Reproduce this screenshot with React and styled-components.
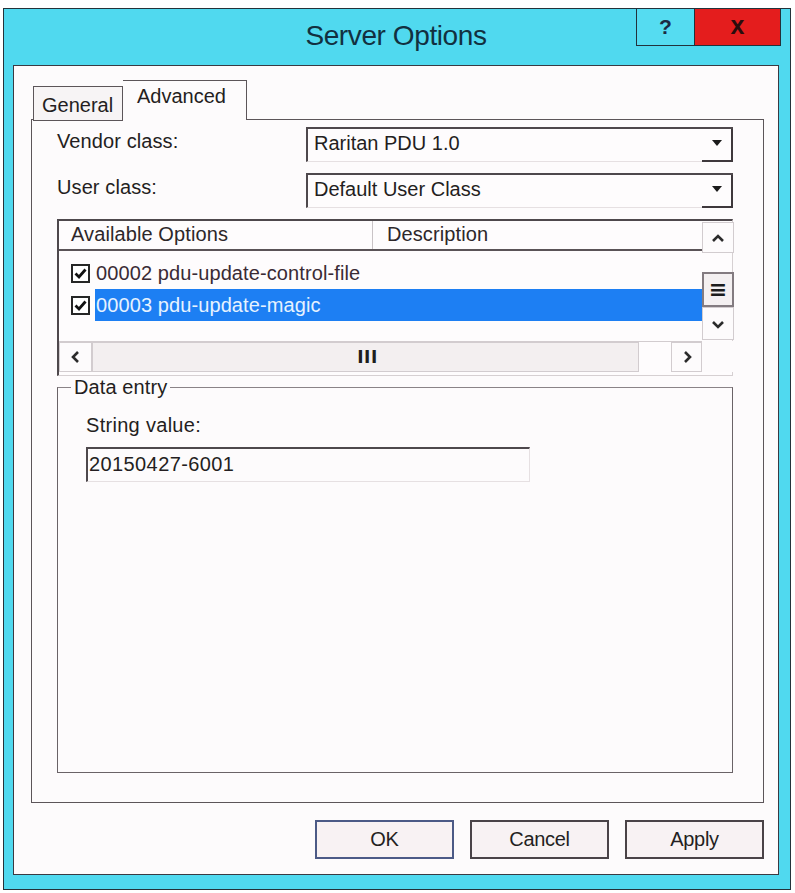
import React from "react";
import styled, { createGlobalStyle } from "styled-components";

const GlobalStyle = createGlobalStyle`
  html, body {
    margin: 0;
    padding: 0;
    background: #ffffff;
  }
  body {
    font-family: "Liberation Sans", Arial, sans-serif;
    color: #241e21;
  }
  * {
    box-sizing: border-box;
  }
`;

const FONT = `"Liberation Sans", Arial, sans-serif`;

const Chevron = ({ dir }) => {
  const paths = {
    up: "M3 11 L8 6 L13 11",
    down: "M3 6 L8 11 L13 6",
    left: "M10 3 L5 8 L10 13",
    right: "M6 3 L11 8 L6 13",
  };
  return (
    <svg width="16" height="16" viewBox="0 0 16 16">
      <path d={paths[dir]} fill="none" stroke="#2b2b2b" strokeWidth="2.6" />
    </svg>
  );
};

const CheckMark = () => (
  <svg width="15" height="15" viewBox="0 0 15 15">
    <path d="M2.5 7.5 L6 11 L12.5 3.5" fill="none" stroke="#111" strokeWidth="2.8" />
  </svg>
);

const ComboBox = ({ value }) => (
  <Combo>
    <ComboText>{value}</ComboText>
    <ComboButton>
      <svg width="12" height="8" viewBox="0 0 12 8">
        <path d="M1 1 L11 1 L6 7 Z" fill="#1b1b1b" />
      </svg>
    </ComboButton>
  </Combo>
);

const App = () => {
  return (
    <>
      <GlobalStyle />
      <Window>
        <TitleBar>
          <Title>Server Options</Title>
          <Controls>
            <HelpButton>?</HelpButton>
            <CloseButton>x</CloseButton>
          </Controls>
        </TitleBar>
        <Client>
          <Tabs>
            <Tab>General</Tab>
            <Tab $active>Advanced</Tab>
          </Tabs>
          <Panel>
            <FieldRow>
              <Label>Vendor class:</Label>
              <ComboBox value="Raritan PDU 1.0" />
            </FieldRow>
            <FieldRow>
              <Label>User class:</Label>
              <ComboBox value="Default User Class" />
            </FieldRow>

            <ListView>
              <ListMain>
                <ListHeader>
                  <HeaderCell $w={314} $divider>Available Options</HeaderCell>
                  <HeaderCell $pad={14}>Description</HeaderCell>
                </ListHeader>
                <ListRow>
                  <CheckBox>
                    <CheckMark />
                  </CheckBox>
                  <RowText>00002 pdu-update-control-file</RowText>
                </ListRow>
                <ListRow>
                  <CheckBox>
                    <CheckMark />
                  </CheckBox>
                  <RowText $selected>00003 pdu-update-magic</RowText>
                </ListRow>
              </ListMain>

              <VScroll>
                <ScrollArrow $h={31}>
                  <Chevron dir="up" />
                </ScrollArrow>
                <ScrollGap $h={19} />
                <VThumb>≡</VThumb>
                <ScrollArrow $h={33}>
                  <Chevron dir="down" />
                </ScrollArrow>
              </VScroll>

              <HScroll>
                <ScrollArrow $w={33}>
                  <Chevron dir="left" />
                </ScrollArrow>
                <HThumb>III</HThumb>
                <ScrollGap $w={32} />
                <ScrollArrow $w={31}>
                  <Chevron dir="right" />
                </ScrollArrow>
              </HScroll>
              <Corner />
            </ListView>

            <GroupBox>
              <Legend>Data entry</Legend>
              <FieldLabel>String value:</FieldLabel>
              <TextInput>20150427-6001</TextInput>
            </GroupBox>
          </Panel>

          <ButtonRow>
            <DialogButton $default>OK</DialogButton>
            <DialogButton>Cancel</DialogButton>
            <DialogButton>Apply</DialogButton>
          </ButtonRow>
        </Client>
      </Window>
    </>
  );
};

export default App;

const Window = styled.div`
  margin: 8px 0 0 3px;
  width: 788px;
  height: 882px;
  border: 1px solid #24323a;
  background-color: #50d9ef;
  display: flex;
  flex-direction: column;
  padding: 0 11px 14px 9px;
`;

const TitleBar = styled.div`
  position: relative;
  height: 56px;
  margin: 0 -11px 0 -9px;
  display: flex;
  align-items: center;
  justify-content: center;
`;

const Title = styled.div`
  font-family: ${FONT};
  font-size: 28px;
  letter-spacing: -0.4px;
  color: #123040;
  padding: 0 2px 2px 0;
`;

const Controls = styled.div`
  position: absolute;
  top: -1px;
  right: 9px;
  display: flex;
`;

const HelpButton = styled.div`
  width: 58px;
  height: 38px;
  border: 1px solid #22323c;
  border-right: none;
  background: #55dcf1;
  display: flex;
  align-items: center;
  justify-content: center;
  font-family: ${FONT};
  font-weight: bold;
  font-size: 21px;
  color: #1b2a44;
`;

const CloseButton = styled.div`
  width: 87px;
  height: 38px;
  border: 1px solid #22323c;
  background: #e41d1d;
  display: flex;
  align-items: center;
  justify-content: center;
  font-family: ${FONT};
  font-weight: bold;
  font-size: 25px;
  color: #2a0d0d;
  padding-bottom: 4px;
`;

const Client = styled.div`
  flex: 1;
  background: #fdfbfc;
  border: 1px solid #3a3a42;
  display: flex;
  flex-direction: column;
  padding: 14px 14px 15px 17px;
`;

const Tabs = styled.div`
  display: flex;
  align-items: flex-end;
  height: 40px;
  padding-left: 2px;
  position: relative;
  z-index: 1;
`;

const Tab = styled.div`
  font-family: ${FONT};
  font-size: 20px;
  letter-spacing: 0;
  color: #241e21;
  border: 1px solid #5c5559;
  border-bottom: ${(p) => (p.$active ? "none" : "1px solid #5c5559")};
  border-left: ${(p) => (p.$active ? "none" : "1px solid #5c5559")};
  background: ${(p) => (p.$active ? "#fdfbfc" : "#f7f4f5")};
  height: ${(p) => (p.$active ? "40px" : "35px")};
  padding: ${(p) => (p.$active ? "4px 10px 0 14px" : "7px 6px 0 8px")};
  width: ${(p) => (p.$active ? "124px" : "90px")};
  margin-bottom: ${(p) => (p.$active ? "0" : "-1px")};
  white-space: nowrap;
`;

const Panel = styled.div`
  flex: 1;
  margin-top: -1px;
  border: 1px solid #5c5559;
  display: flex;
  flex-direction: column;
  padding: 7px 30px 29px 25px;
`;

const FieldRow = styled.div`
  display: flex;
  align-items: center;
  height: 34px;
  margin-bottom: 12px;
`;

const Label = styled.div`
  width: 249px;
  font-family: ${FONT};
  font-size: 20px;
  letter-spacing: 0.1px;
  color: #241e21;
  padding-bottom: 6px;
`;

const Combo = styled.div`
  flex: 1;
  height: 35px;
  display: flex;
  align-items: stretch;
  border-top: 2px solid #4e484c;
  border-left: 2px solid #4e484c;
  border-bottom: 1px solid #e6e0e2;
  background: #fefcfd;
`;

const ComboText = styled.div`
  flex: 1;
  font-family: ${FONT};
  font-size: 20px;
  letter-spacing: 0;
  color: #241e21;
  padding: 3px 0 0 6px;
`;

const ComboButton = styled.div`
  width: 31px;
  border-right: 2px solid #3e383c;
  border-bottom: 2px solid #3e383c;
  margin-bottom: -1px;
  display: flex;
  align-items: center;
  justify-content: center;
  padding-bottom: 2px;
`;

const ListView = styled.div`
  height: 157px;
  display: grid;
  grid-template-columns: 1fr 32px;
  grid-template-rows: 120px 31px;
  border-top: 2px solid #4e484c;
  border-left: 2px solid #4e484c;
  border-right: 1px solid #d6d0d2;
  border-bottom: 1px solid #d6d0d2;
  background: #fefcfd;
`;

const ListMain = styled.div`
  display: flex;
  flex-direction: column;
  overflow: hidden;
`;

const ListHeader = styled.div`
  display: flex;
  height: 30px;
  border-bottom: 2px solid #5a5357;
`;

const HeaderCell = styled.div`
  width: ${(p) => (p.$w ? `${p.$w}px` : "auto")};
  flex: ${(p) => (p.$w ? "none" : "1")};
  border-right: ${(p) => (p.$divider ? "1px solid #c9c3c6" : "none")};
  font-family: ${FONT};
  font-size: 20px;
  letter-spacing: 0.1px;
  color: #2d272a;
  padding: 2px 0 0 ${(p) => p.$pad || 12}px;
  white-space: nowrap;
`;

const ListRow = styled.div`
  display: flex;
  align-items: center;
  height: 32px;
  padding-left: 12px;
  &:nth-child(2) {
    margin-top: 6px;
  }
`;

const CheckBox = styled.div`
  width: 19px;
  height: 19px;
  border: 2px solid #262626;
  background: #ffffff;
  display: flex;
  align-items: center;
  justify-content: center;
  margin-right: 5px;
`;

const RowText = styled.div`
  flex: 1;
  height: 32px;
  display: flex;
  align-items: center;
  padding-left: 1px;
  font-family: ${FONT};
  font-size: 20px;
  letter-spacing: 0.1px;
  white-space: nowrap;
  color: ${(p) => (p.$selected ? "#e6f2ff" : "#3a2b35")};
  background: ${(p) => (p.$selected ? "#1d7ff3" : "transparent")};
`;

const VScroll = styled.div`
  display: flex;
  flex-direction: column;
  padding-top: 1px;
`;

const ScrollArrow = styled.div`
  width: ${(p) => (p.$w ? `${p.$w}px` : "100%")};
  height: ${(p) => (p.$h ? `${p.$h}px` : "100%")};
  border: 1px solid #d2cccf;
  background: #fdfbfc;
  display: flex;
  align-items: center;
  justify-content: center;
`;

const ScrollGap = styled.div`
  width: ${(p) => (p.$w ? `${p.$w}px` : "100%")};
  height: ${(p) => (p.$h ? `${p.$h}px` : "100%")};
`;

const VThumb = styled.div`
  height: 35px;
  border: 2px solid #837b80;
  background: #f4f0f1;
  display: flex;
  align-items: center;
  justify-content: center;
  font-family: "DejaVu Sans", sans-serif;
  font-weight: bold;
  font-size: 22px;
  color: #1c1c1c;
`;

const HScroll = styled.div`
  display: flex;
  border-top: 1px solid #d2cccf;
`;

const HThumb = styled.div`
  width: 547px;
  height: 100%;
  background: #f3eff0;
  border: 1px solid #d2cccf;
  display: flex;
  align-items: center;
  justify-content: center;
  font-family: "DejaVu Sans", sans-serif;
  font-weight: bold;
  font-size: 17px;
  letter-spacing: 0.5px;
  color: #1e1e1e;
  padding-left: 4px;
`;

const Corner = styled.div`
  background: #fdfbfc;
`;

const GroupBox = styled.fieldset`
  flex: 1;
  margin: 0;
  border: 1px solid #6a6367;
  border-top-color: #8a8387;
  padding: 0 0 0 28px;
  min-width: 0;
`;

const Legend = styled.legend`
  font-family: ${FONT};
  font-size: 20px;
  letter-spacing: 0.1px;
  line-height: 22px;
  color: #241e21;
  padding: 0 3px;
  margin-left: -15px;
`;

const FieldLabel = styled.div`
  font-family: ${FONT};
  font-size: 20px;
  letter-spacing: 0.3px;
  line-height: 24px;
  color: #241e21;
  margin-top: 15px;
  margin-bottom: 10px;
`;

const TextInput = styled.div`
  width: 444px;
  height: 35px;
  border-top: 2px solid #4e484c;
  border-left: 2px solid #4e484c;
  border-bottom: 1px solid #e6e0e2;
  border-right: 1px solid #e6e0e2;
  font-family: ${FONT};
  font-size: 20px;
  letter-spacing: 0.4px;
  color: #241e21;
  padding: 4px 0 0 1px;
`;

const ButtonRow = styled.div`
  display: flex;
  justify-content: flex-end;
  gap: 16px;
  margin-top: 17px;
`;

const DialogButton = styled.div`
  width: 139px;
  height: 39px;
  border: 2px solid ${(p) => (p.$default ? "#4c5a86" : "#4a4347")};
  background: #f8f2f3;
  display: flex;
  align-items: center;
  justify-content: center;
  font-family: ${FONT};
  font-size: 20px;
  letter-spacing: -0.3px;
  color: #241f22;
`;
